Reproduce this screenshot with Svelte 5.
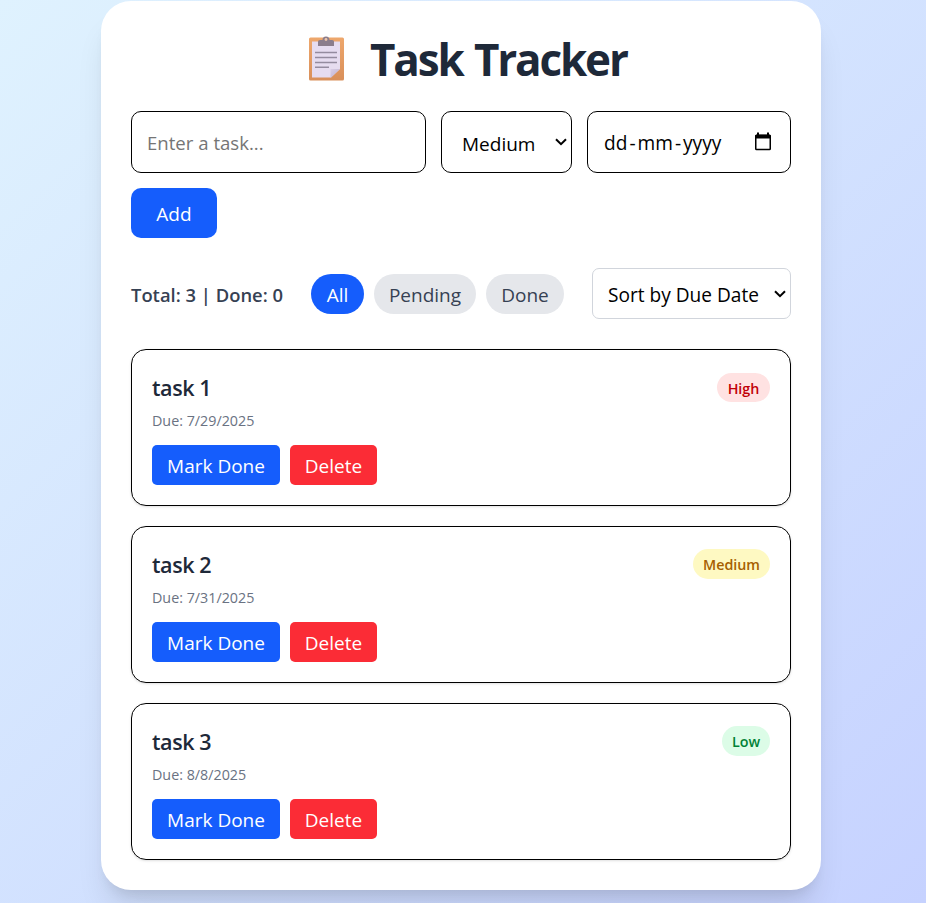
<script>
  const tasks = [
    { name: 'task 1', due: '7/29/2025', priority: 'High' },
    { name: 'task 2', due: '7/31/2025', priority: 'Medium' },
    { name: 'task 3', due: '8/8/2025', priority: 'Low' }
  ];
  let filter = $state('All');
</script>

{#snippet chevron()}
  <svg class="chevron" viewBox="0 0 12 8" width="12" height="8"><path d="M1 1.2 L6 6.2 L11 1.2" fill="none" stroke="#000" stroke-width="2" /></svg>
{/snippet}

<main>
  <section class="panel">
    <h1>
      <svg class="clip" viewBox="0 0 36 45" width="36" height="45">
        <defs>
          <linearGradient id="board" x2="0" y2="1"><stop offset="0" stop-color="#eea76c" /><stop offset="1" stop-color="#d98f5a" /></linearGradient>
          <linearGradient id="fold" x2="1" y2="1"><stop offset="0" stop-color="#d9cee6" /><stop offset="1" stop-color="#bdb0d0" /></linearGradient>
        </defs>
        <rect x="0" y="1.5" width="35" height="43" rx="1.5" fill="url(#board)" />
        <path d="M3 5.500 H31 V33 L22 41.500 H3Z" fill="#e6dcf0" />
        <path d="M21.500 33 H31 L22 41.500 Q21 41.500 21.500 40Z" fill="url(#fold)" />
        <path d="M9 10 V5.500 Q9 4 11 4 H13.500 Q13.500 0.500 17 0.500 T20.500 4 H23 Q25 4 25 5.500 V10Z" fill="#8b7d8c" />
        <circle cx="17" cy="3.500" r="1.400" fill="#eec5aa" />
        <path d="M6 16.500 H28 M6 21.500 H28 M6 26.500 H28 M6 31.300 H20" stroke="#948b9f" stroke-width="1.600" />
      </svg>
      <span>Task Tracker</span>
    </h1>

    <div class="form">
      <input class="task-input" placeholder="Enter a task..." />
      <div class="field priority"><span>Medium</span>{@render chevron()}</div>
      <div class="field date">
        <span>dd<i>-</i>mm<i>-</i>yyyy</span>
        <svg viewBox="0 0 18 19" width="18" height="19"><rect x="1.750" y="3.500" width="14.500" height="14" rx="0.800" fill="none" stroke="#000" stroke-width="1.500" /><path d="M1 4 Q1 2.500 2.500 2.500 H15.500 Q17 2.500 17 4 V6.500 H1Z M3 0.500 H5 V3 H3Z M13 0.500 H15 V3 H13Z" fill="#000" /></svg>
      </div>
      <button class="add">Add</button>
    </div>

    <div class="bar">
      <p>Total: 3 | Done: 0</p>
      <div class="filters">
        {#each ['All', 'Pending', 'Done'] as f}
          <button class={['pill', f.toLowerCase(), filter === f && 'active']} onclick={() => (filter = f)}>{f}</button>
        {/each}
      </div>
      <div class="field sort"><span>Sort by Due Date</span>{@render chevron()}</div>
    </div>

    <ul>
      {#each tasks as task}
        <li>
          <div class="info">
            <h2>{task.name}</h2>
            <p class="due">Due: {task.due}</p>
            <div class="actions">
              <button class="mark">Mark Done</button>
              <button class="delete">Delete</button>
            </div>
          </div>
          <span class="badge {task.priority.toLowerCase()}">{task.priority}</span>
        </li>
      {/each}
    </ul>
  </section>
</main>

<style>
  :global(body) { margin: 0; }
  * { box-sizing: border-box; }
  main {
    height: 903px;
    overflow: hidden;
    padding: 1px 0 0 101px;
    background: linear-gradient(to bottom right, #dff2fe, #c6d2ff);
    font: 19px/30px "Open Sans", "Noto Sans", sans-serif;
    color: #000;
  }
  .panel {
    width: 720px;
    height: 889px;
    padding: 30px;
    border-radius: 30px;
    background: #fff;
    box-shadow: 0 25px 31px -6px rgb(0 0 0 / 0.1), 0 10px 12.5px -7.5px rgb(0 0 0 / 0.1);
  }
  h1, h2, p, ul { margin: 0; padding: 0; }
  button { font: inherit; border: 0; padding: 0; white-space: nowrap; cursor: pointer; }
  h1 {
    height: 50px;
    margin-bottom: 30px;
    padding-left: 178px;
    display: flex;
    gap: 25px;
    font-size: 44px;
    line-height: 56px;
    letter-spacing: -2.15px;
    word-spacing: 2px;
    font-weight: 700;
    color: #1e2939;
    white-space: nowrap;
  }
  .clip { margin-top: 5px; flex: none; }
  .form { display: flex; flex-wrap: wrap; gap: 15px; margin-bottom: 30px; }
  .task-input {
    width: 295px;
    height: 62px;
    padding: 1px 15px 0;
    border: 1px solid #000;
    border-radius: 10px;
    font: inherit;
    font-size: 18.6px;
    outline: 0;
    background: #fff;
  }
  .task-input::placeholder { color: #757575; opacity: 1; }
  .field {
    display: flex;
    align-items: center;
    justify-content: space-between;
    height: 62px;
    border: 1px solid #000;
    border-radius: 10px;
    white-space: nowrap;
  }
  .field span { position: relative; top: 1px; }
  .field i { font-style: normal; margin: 0 2px; }
  .priority { width: 131px; padding: 2px 4px 0 20px; }
  .priority .chevron { margin-top: -2px; }
  .date { width: 204px; padding: 0 18px 0 16px; }
  .date span { font-size: 19.1px; }
  .date svg { margin-top: -2px; }
  .add { width: 86px; height: 50px; padding-top: 2px; border-radius: 10px; background: #155dfc; color: #fff; }
  .bar { display: flex; align-items: center; height: 51px; margin-bottom: 30px; }
  .bar p { width: 180px; font-weight: 600; font-size: 18.4px; color: #364153; padding-top: 2px; white-space: nowrap; }
  .filters { display: flex; gap: 10px; }
  .pill { height: 40px; padding-top: 2px; border-radius: 20px; background: #e5e7eb; color: #364153; }
  .pill.active { background: #155dfc; color: #fff; }
  .all { width: 53px; }
  .pending { width: 102px; }
  .done { width: 78px; }
  .sort { width: 199px; height: 51px; margin-left: auto; padding: 0 4px 0 15px; border-color: #d1d5dc; border-radius: 7px; }
  .sort span { font-size: 19.1px; }
  ul { display: flex; flex-direction: column; gap: 20px; list-style: none; }
  li {
    height: 157px;
    padding: 20px;
    display: flex;
    justify-content: space-between;
    align-items: flex-start;
    border: 1px solid #000;
    border-radius: 15px;
    box-shadow: 0 1px 3px rgb(0 0 0 / 0.1), 0 1px 2px -1px rgb(0 0 0 / 0.1);
  }
  h2 { height: 35px; font-size: 21.5px; line-height: 36px; letter-spacing: -0.4px; font-weight: 600; color: #1e2939; }
  .due { height: 25px; margin-bottom: 15px; font-size: 14.3px; line-height: 31px; color: #6a7282; }
  .actions { display: flex; gap: 10px; }
  .actions button { height: 40px; padding-top: 2px; border-radius: 5px; color: #fff; }
  .mark { width: 128px; background: #155dfc; }
  .delete { width: 87px; background: #fb2c36; }
  .badge { height: 30px; margin-top: 2px; padding: 1px 0 0; border-radius: 15px; font-size: 14.3px; line-height: 30px; font-weight: 600; text-align: center; }
  .high { width: 53px; height: 29px; margin-top: 3px; background: #ffe2e2; color: #c10007; }
  .medium { width: 77px; background: #fef9c2; color: #a65f00; }
  .low { width: 48px; background: #dcfce7; color: #008236; }
</style>
